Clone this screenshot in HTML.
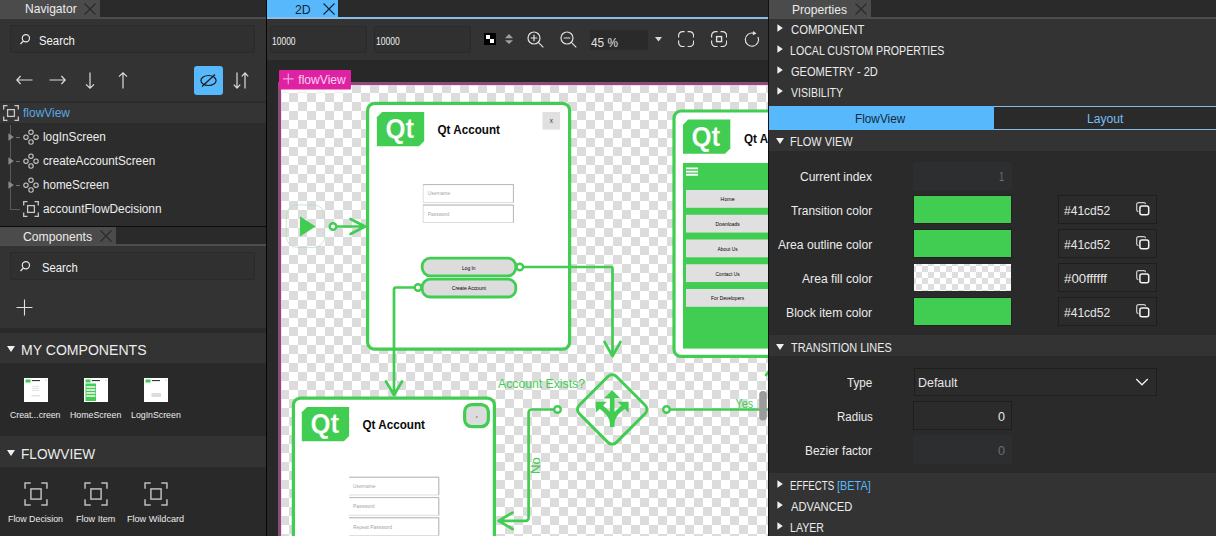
<!DOCTYPE html>
<html><head><meta charset="utf-8"><title>Qt Design Studio - FlowView</title>
<style>
*{box-sizing:border-box;margin:0;padding:0}
html,body{width:1216px;height:536px;overflow:hidden;background:#262626}
body{position:relative;font-family:"Liberation Sans",sans-serif;color:#eaeaea;font-size:12px}
.abs,.abs *{position:absolute}
.t{white-space:nowrap;line-height:1}
#left{left:0;top:0;width:266px;height:536px;background:#333;overflow:hidden}
#div1{left:266px;top:0;width:1px;height:536px;background:#040404}
#center{left:267px;top:0;width:501px;height:536px;background:#282828;overflow:hidden}
#div2{left:768px;top:0;width:1px;height:536px;background:#111}
#right{left:769px;top:0;width:447px;height:536px;background:#333;overflow:hidden}
.tabbar{left:0;height:17px;background:#2a2a2a}
.tab{top:0;height:17px;background:#4b4b4b}
.tabline{height:2px;background:#4d4d4d}
.sbox{background:#303030;border:1px solid #2a2a2a;border-radius:2px}
</style></head><body>
<div id="left" class="abs"><div class="tabbar" style="top:0;width:266px"></div>
<div class="tab" style="left:0;width:100px"></div>
<div class="t" style="left:24.50px;top:2.35px;font-size:13px;color:#ececec;transform-origin:0 0;transform:scaleX(0.9288)">Navigator</div>
<svg style="left:84px;top:3px" width="12" height="12" viewBox="0 0 12 12" fill="none" stroke="#2a2a2a" stroke-width="1.1"><path d="M0.5 0.5L11.5 11.5M11.5 0.5L0.5 11.5"/></svg>
<div class="tabline" style="left:0;top:17px;width:266px"></div>
<div class="sbox" style="left:10px;top:25px;width:245px;height:28px"></div>
<svg style="left:20px;top:33px" width="12" height="12" viewBox="0 0 12 12" fill="none" stroke="#e6e6e6" stroke-width="1.2"><circle cx="5.9" cy="5.3" r="3.6"/><path d="M3.4 8L0.5 11"/></svg>
<div class="t" style="left:38.89px;top:34.89px;font-size:12.5px;color:#f4f4f4;transform-origin:0 0;transform:scaleX(0.9072)">Search</div>
<svg style="left:16px;top:75px" width="17" height="10" viewBox="0 0 17 10" stroke="#dcdcdc" stroke-width="1.2" fill="none"><path d="M0.8 5H16.5M4.6 1L0.8 5L4.6 9"/></svg>
<svg style="left:49px;top:75px" width="17" height="10" viewBox="0 0 17 10" stroke="#dcdcdc" stroke-width="1.2" fill="none"><path d="M0.5 5H16.2M12.4 1L16.2 5L12.4 9"/></svg>
<svg style="left:85px;top:72px" width="10" height="17" viewBox="0 0 10 17" stroke="#dcdcdc" stroke-width="1.2" fill="none"><path d="M5 0.5V16.2M1 12.4L5 16.2L9 12.4"/></svg>
<svg style="left:118px;top:72px" width="10" height="17" viewBox="0 0 10 17" stroke="#dcdcdc" stroke-width="1.2" fill="none"><path d="M5 16.5V0.8M1 4.6L5 0.8L9 4.6"/></svg>
<div style="left:194px;top:66px;width:29px;height:29px;background:#57b9fc;border-radius:3px"></div>
<svg style="left:198px;top:70px" width="21" height="21" viewBox="0 0 21 21" fill="none" stroke="#1a1a1a" stroke-width="1.2"><ellipse cx="10.5" cy="10.5" rx="7.6" ry="5"/><path d="M4 16.5L17 4.5"/></svg>
<svg style="left:233px;top:72px" width="16" height="17" viewBox="0 0 16 17" stroke="#dcdcdc" stroke-width="1.2" fill="none"><path d="M4 0.5V16M0.8 12.6L4 16L7.2 12.6M12 16.5V1M8.8 4.4L12 1L15.2 4.4"/></svg>
<div style="left:0;top:101px;width:266px;height:125px;background:#2c2c2c"></div>
<div style="left:0;top:102.5px;width:266px;height:20.5px;background:#343434"></div>
<svg style="left:3px;top:105px" width="16" height="16" viewBox="0 0 16 16" fill="none" stroke="#c8c8c8" stroke-width="1.3"><path d="M0.7 4.5V0.7H4.5M11.5 0.7H15.3V4.5M15.3 11.5V15.3H11.5M4.5 15.3H0.7V11.5"/><rect x="4.6" y="4.6" width="6.8" height="6.8"/></svg>
<div class="t" style="left:23.22px;top:107.19px;font-size:12.5px;color:#57a8e6;transform-origin:0 0;transform:scaleX(0.9573)">flowView</div>
<div style="left:10px;top:125px;width:1px;height:85px;background:#595959"></div>
<div style="left:10px;top:209px;width:10px;height:1px;background:#595959"></div>
<div style="left:16px;top:137px;width:4px;height:1px;background:#707070"></div>
<svg style="left:7.6px;top:133px" width="6" height="8" viewBox="0 0 6 8"><path d="M0.4 0.2L5.8 4L0.4 7.8Z" fill="#8a8a8a"/></svg>
<svg style="left:23px;top:129px" width="16" height="16" viewBox="0 0 16 16" fill="none" stroke="#c8c8c8" stroke-width="1.1"><circle cx="8" cy="3.2" r="2.2"/><circle cx="3" cy="8.2" r="2.2"/><circle cx="13" cy="8.2" r="2.2"/><circle cx="8" cy="13" r="2.2"/></svg>
<div class="t" style="left:43.41px;top:131.49px;font-size:12.5px;color:#ececec;transform-origin:0 0;transform:scaleX(0.9422)">logInScreen</div>
<div style="left:16px;top:161px;width:4px;height:1px;background:#707070"></div>
<svg style="left:7.6px;top:157px" width="6" height="8" viewBox="0 0 6 8"><path d="M0.4 0.2L5.8 4L0.4 7.8Z" fill="#8a8a8a"/></svg>
<svg style="left:23px;top:153px" width="16" height="16" viewBox="0 0 16 16" fill="none" stroke="#c8c8c8" stroke-width="1.1"><circle cx="8" cy="3.2" r="2.2"/><circle cx="3" cy="8.2" r="2.2"/><circle cx="13" cy="8.2" r="2.2"/><circle cx="8" cy="13" r="2.2"/></svg>
<div class="t" style="left:42.80px;top:155.49px;font-size:12.5px;color:#ececec;transform-origin:0 0;transform:scaleX(0.9388)">createAccountScreen</div>
<div style="left:16px;top:185px;width:4px;height:1px;background:#707070"></div>
<svg style="left:7.6px;top:181px" width="6" height="8" viewBox="0 0 6 8"><path d="M0.4 0.2L5.8 4L0.4 7.8Z" fill="#8a8a8a"/></svg>
<svg style="left:23px;top:177px" width="16" height="16" viewBox="0 0 16 16" fill="none" stroke="#c8c8c8" stroke-width="1.1"><circle cx="8" cy="3.2" r="2.2"/><circle cx="3" cy="8.2" r="2.2"/><circle cx="13" cy="8.2" r="2.2"/><circle cx="8" cy="13" r="2.2"/></svg>
<div class="t" style="left:43.39px;top:179.49px;font-size:12.5px;color:#ececec;transform-origin:0 0;transform:scaleX(0.9304)">homeScreen</div>
<svg style="left:23px;top:201px" width="16" height="16" viewBox="0 0 16 16" fill="none" stroke="#c8c8c8" stroke-width="1.3"><path d="M0.7 4.5V0.7H4.5M11.5 0.7H15.3V4.5M15.3 11.5V15.3H11.5M4.5 15.3H0.7V11.5"/><rect x="4.6" y="4.6" width="6.8" height="6.8"/></svg>
<div class="t" style="left:42.80px;top:203.49px;font-size:12.5px;color:#ececec;transform-origin:0 0;transform:scaleX(0.9479)">accountFlowDecisionn</div>
<div style="left:0;top:226px;width:266px;height:1px;background:#0c0c0c"></div>
<div class="tabbar" style="top:227px;width:266px"></div>
<div class="tab" style="left:0;top:227px;width:116px"></div>
<div class="t" style="left:23.39px;top:230.35px;font-size:13px;color:#ececec;transform-origin:0 0;transform:scaleX(0.9366)">Components</div>
<svg style="left:100px;top:230px" width="12" height="12" viewBox="0 0 12 12" fill="none" stroke="#2a2a2a" stroke-width="1.1"><path d="M0.5 0.5L11.5 11.5M11.5 0.5L0.5 11.5"/></svg>
<div class="tabline" style="left:0;top:244px;width:266px"></div>
<div class="sbox" style="left:10px;top:252px;width:245px;height:28px"></div>
<svg style="left:20px;top:260.3px" width="12" height="12" viewBox="0 0 12 12" fill="none" stroke="#e6e6e6" stroke-width="1.2"><circle cx="5.9" cy="5.3" r="3.6"/><path d="M3.4 8L0.5 11"/></svg>
<div class="t" style="left:41.89px;top:261.59px;font-size:12.5px;color:#f4f4f4;transform-origin:0 0;transform:scaleX(0.9020)">Search</div>
<svg style="left:16px;top:299px" width="17" height="17" viewBox="0 0 17 17" stroke="#e0e0e0" stroke-width="1.1"><path d="M8.5 0.5V16.5M0.5 8.5H16.5"/></svg>
<div style="left:0;top:328px;width:266px;height:5px;background:#2a2a2a"></div>
<div style="left:0;top:363px;width:266px;height:73px;background:#292929"></div>
<svg style="left:7px;top:346px" width="8" height="6" viewBox="0 0 8 6"><path d="M0 0H8L4 6Z" fill="#f0f0f0"/></svg>
<div class="t" style="left:21.34px;top:342.62px;font-size:14.5px;color:#ececec;transform-origin:0 0;transform:scaleX(0.9698)">MY COMPONENTS</div>
<div style="left:0;top:467px;width:266px;height:69px;background:#292929"></div>
<svg style="left:7px;top:450px" width="8" height="6" viewBox="0 0 8 6"><path d="M0 0H8L4 6Z" fill="#f0f0f0"/></svg>
<div class="t" style="left:21.38px;top:446.52px;font-size:14.5px;color:#ececec;transform-origin:0 0;transform:scaleX(0.9397)">FLOWVIEW</div>
<svg style="left:24px;top:378px" width="24" height="24" viewBox="0 0 24 24"><rect width="24" height="24" fill="#fff"/><rect x="1.5" y="1.5" width="5" height="3" fill="#41cd52"/><rect x="7.8" y="2.1" width="8.2" height="1" fill="#222"/><rect x="21" y="1.5" width="1.6" height="1.6" fill="#ddd"/><rect x="8" y="8" width="7" height="0.8" fill="#ddd"/><rect x="8" y="10" width="7" height="0.8" fill="#ddd"/><rect x="8" y="12" width="7" height="0.8" fill="#ddd"/><rect x="7.5" y="17" width="8.5" height="1.5" fill="#e2e2e2"/></svg>
<svg style="left:84px;top:378px" width="24" height="24" viewBox="0 0 24 24"><rect width="24" height="24" fill="#fff"/><rect x="1.5" y="1.5" width="5" height="3" fill="#41cd52"/><rect x="7.8" y="2.1" width="8.2" height="1" fill="#222"/><rect x="21" y="1.5" width="1.6" height="1.6" fill="#ddd"/><rect x="1.5" y="5.5" width="10.5" height="17.5" fill="#41cd52"/><rect x="2.3" y="8" width="9" height="2" fill="#cfe9d2"/><rect x="2.3" y="11" width="9" height="2" fill="#cfe9d2"/><rect x="2.3" y="14" width="9" height="2" fill="#cfe9d2"/><rect x="2.3" y="17" width="9" height="2" fill="#cfe9d2"/></svg>
<svg style="left:144px;top:378px" width="24" height="24" viewBox="0 0 24 24"><rect width="24" height="24" fill="#fff"/><rect x="1.5" y="1.5" width="5" height="3" fill="#41cd52"/><rect x="7.8" y="2.1" width="8.2" height="1" fill="#222"/><rect x="21" y="1.5" width="1.6" height="1.6" fill="#ddd"/><rect x="7.5" y="15" width="9.5" height="4" fill="#ddd"/></svg>
<div class="t" style="left:10.06px;top:409.71px;font-size:9.8px;color:#ececec;transform-origin:0 0;transform:scaleX(0.8912)">Creat...creen</div>
<div class="t" style="left:69.78px;top:409.71px;font-size:9.8px;color:#ececec;transform-origin:0 0;transform:scaleX(0.8967)">HomeScreen</div>
<div class="t" style="left:130.78px;top:409.71px;font-size:9.8px;color:#ececec;transform-origin:0 0;transform:scaleX(0.8957)">LogInScreen</div>
<svg style="left:24px;top:482px" width="24" height="24" viewBox="0 0 16 16" fill="none" stroke="#bdbdbd" stroke-width="1.0"><path d="M0.7 4.5V0.7H4.5M11.5 0.7H15.3V4.5M15.3 11.5V15.3H11.5M4.5 15.3H0.7V11.5"/><rect x="4.6" y="4.6" width="6.8" height="6.8"/></svg>
<svg style="left:84px;top:482px" width="24" height="24" viewBox="0 0 16 16" fill="none" stroke="#bdbdbd" stroke-width="1.0"><path d="M0.7 4.5V0.7H4.5M11.5 0.7H15.3V4.5M15.3 11.5V15.3H11.5M4.5 15.3H0.7V11.5"/><rect x="4.6" y="4.6" width="6.8" height="6.8"/></svg>
<svg style="left:144px;top:482px" width="24" height="24" viewBox="0 0 16 16" fill="none" stroke="#bdbdbd" stroke-width="1.0"><path d="M0.7 4.5V0.7H4.5M11.5 0.7H15.3V4.5M15.3 11.5V15.3H11.5M4.5 15.3H0.7V11.5"/><rect x="4.6" y="4.6" width="6.8" height="6.8"/></svg>
<div class="t" style="left:7.77px;top:513.91px;font-size:9.8px;color:#ececec;transform-origin:0 0;transform:scaleX(0.9025)">Flow Decision</div>
<div class="t" style="left:75.75px;top:513.91px;font-size:9.8px;color:#ececec;transform-origin:0 0;transform:scaleX(0.9265)">Flow Item</div>
<div class="t" style="left:126.75px;top:513.91px;font-size:9.8px;color:#ececec;transform-origin:0 0;transform:scaleX(0.9276)">Flow Wildcard</div></div>
<div id="div1" class="abs"></div>
<div id="center" class="abs"><div class="tabbar" style="top:0;width:501px"></div>
<div style="left:0;top:0;width:71px;height:17px;background:#57b9fc"></div>
<div class="t" style="left:28.14px;top:3.10px;font-size:13px;color:#10243a;transform-origin:0 0;transform:scaleX(0.9452)">2D</div>
<svg style="left:56px;top:3px" width="12" height="12" viewBox="0 0 12 12" fill="none" stroke="#10243a" stroke-width="1.1"><path d="M0.5 0.5L11.5 11.5M11.5 0.5L0.5 11.5"/></svg>
<div style="left:0;top:17px;width:501px;height:2px;background:#8cbde8"></div>
<div style="left:0;top:19px;width:501px;height:1px;background:#1a2f43;opacity:.7"></div>
<div style="left:0;top:19px;width:501px;height:41px;background:#333"></div>
<div class="sbox" style="left:3px;top:26px;width:97px;height:27px"></div>
<div class="sbox" style="left:107px;top:26px;width:97px;height:27px"></div>
<div class="t" style="left:4.66px;top:36.17px;font-size:10.5px;color:#f0f0f0;transform-origin:0 0;transform:scaleX(0.8069)">10000</div>
<div class="t" style="left:108.66px;top:36.17px;font-size:10.5px;color:#f0f0f0;transform-origin:0 0;transform:scaleX(0.8140)">10000</div>
<svg style="left:217px;top:33px" width="12" height="12" viewBox="0 0 12 12"><rect width="12" height="12" fill="#000"/><rect x="2" y="2" width="4" height="4" fill="#fff"/><rect x="6" y="6" width="4" height="4" fill="#fff"/></svg>
<svg style="left:238px;top:34px" width="8" height="10" viewBox="0 0 8 10" fill="#a0a0a0"><path d="M0 4.3L4 0L8 4.3ZM0 6.3H8L4 10Z"/></svg>
<svg style="left:260.29999999999995px;top:30.8px" width="18" height="18" viewBox="0 0 18 18" fill="none" stroke="#e2e2e2" stroke-width="1.2"><circle cx="7" cy="7" r="6"/><path d="M11.3 11.3L16.3 16.3M3.7 7H10.3M7 3.7V10.3"/></svg>
<svg style="left:293.29999999999995px;top:30.8px" width="18" height="18" viewBox="0 0 18 18" fill="none" stroke="#e2e2e2" stroke-width="1.2"><circle cx="7" cy="7" r="6"/><path d="M11.3 11.3L16.3 16.3M3.7 7H10.3"/></svg>
<div style="left:323px;top:30px;width:58px;height:20px;background:#2a2a2a"></div>
<div class="t" style="left:324.48px;top:36.99px;font-size:12.5px;color:#e0e0e0;transform-origin:0 0;transform:scaleX(0.9449)">45 %</div>
<svg style="left:388px;top:37px" width="7" height="5" viewBox="0 0 7 5"><path d="M0 0H7L3.5 4.6Z" fill="#d8d8d8"/></svg>
<svg style="left:411px;top:31px" width="16.2" height="16.2" viewBox="0 0 16.2 16.2" fill="none" stroke="#e2e2e2" stroke-width="1.2"><path d="M6.6 0.6H4.6A4 4 0 0 0 0.6 4.6V6.6M0.6 9.6V11.6A4 4 0 0 0 4.6 15.6H6.6M9.6 15.6H11.6A4 4 0 0 0 15.6 11.6V9.6M15.6 6.6V4.6A4 4 0 0 0 11.6 0.6H9.6"/></svg>
<svg style="left:444px;top:31px" width="16.2" height="16.2" viewBox="0 0 16.2 16.2" fill="none" stroke="#e2e2e2" stroke-width="1.2"><path d="M6.6 0.6H4.6A4 4 0 0 0 0.6 4.6V6.6M0.6 9.6V11.6A4 4 0 0 0 4.6 15.6H6.6M9.6 15.6H11.6A4 4 0 0 0 15.6 11.6V9.6M15.6 6.6V4.6A4 4 0 0 0 11.6 0.6H9.6"/><rect x="5.6" y="5.6" width="5" height="5" stroke-width="1.4"/></svg>
<svg style="left:476px;top:30px" width="18" height="18" viewBox="0 0 18 18" fill="none" stroke="#e2e2e2" stroke-width="1.2"><path d="M10.5 3.2A6.6 6.6 0 1 0 15 7"/><path d="M10.2 1L13.5 3.6L9.8 5.3Z" fill="#e2e2e2" stroke="none"/></svg>
<svg style="left:0;top:60px" width="501" height="476" viewBox="267 60 501 476" font-family="'Liberation Sans',sans-serif">
<defs><pattern id="chk" x="280" y="84" width="18" height="18" patternUnits="userSpaceOnUse"><rect width="18" height="18" fill="#fff"/><rect width="9" height="9" fill="#dcdcdc"/><rect x="9" y="9" width="9" height="9" fill="#dcdcdc"/></pattern></defs>
<rect x="281" y="85" width="500" height="460" fill="url(#chk)"/>
<rect x="279.5" y="83.5" width="500" height="470" fill="none" stroke="#8a4c7b" stroke-width="3"/>
<rect x="281" y="85" width="500" height="0.9" fill="#f3c6e6" opacity="0.7"/><rect x="281" y="85" width="0.9" height="460" fill="#f3c6e6" opacity="0.7"/>
<rect x="281" y="89" width="70" height="3.6" fill="#fff" opacity="0.85"/>
<rect x="279" y="70" width="72" height="19.5" rx="1" fill="#df22a4"/>
<path d="M283 78.9H293.6M288.3 73.6V84.2" stroke="#f5a3db" stroke-width="1.2"/>
<text x="298.3" y="83.7" font-size="12.5" fill="#fad2ef" textLength="47.5" lengthAdjust="spacingAndGlyphs">flowView</text>
<rect x="367.6" y="103.4" width="202" height="245.8" rx="7" fill="#fff" stroke="#41cd52" stroke-width="3.2"/>
<path d="M382.09999999999997 112H424.2V141.0L419.0 146.2H376.9V117.2Z" fill="#41cd52"/><text x="385.5" y="138.3" font-size="27" font-weight="bold" fill="#fff" stroke="#41cd52" stroke-width="0.15" paint-order="fill" textLength="28.6" lengthAdjust="spacingAndGlyphs">Qt</text>
<text x="437.5" y="134.3" font-size="12" font-weight="bold" fill="#0a0a0a" textLength="62.4" lengthAdjust="spacingAndGlyphs">Qt Account</text>
<rect x="542.5" y="112" width="17.6" height="17.6" fill="#e0e0e0"/>
<text x="551.3" y="123.1" font-size="6.5" fill="#333" text-anchor="middle" textLength="3.2" lengthAdjust="spacingAndGlyphs">x</text>
<rect x="423.2" y="184.6" width="90.2" height="17.8" fill="#fff" stroke="#d6d6d6" stroke-width="0.8"/><path d="M423.2 184.6H513.4V202.4" fill="none" stroke="#b2b2b2" stroke-width="0.9"/><text x="427.8" y="195.4" font-size="5.3" fill="#a4a4a4" textLength="22.5" lengthAdjust="spacingAndGlyphs">Username</text>
<rect x="423.2" y="205" width="90.2" height="17.6" fill="#fff" stroke="#d6d6d6" stroke-width="0.8"/><path d="M423.2 205H513.4V222.6" fill="none" stroke="#b2b2b2" stroke-width="0.9"/><text x="427.8" y="215.70000000000002" font-size="5.3" fill="#a4a4a4" textLength="21.5" lengthAdjust="spacingAndGlyphs">Password</text>
<rect x="422.2" y="258.2" width="93.6" height="17.6" rx="8" fill="#dcdcdc" stroke="#41cd52" stroke-width="2.8"/>
<rect x="422.2" y="279.2" width="93.6" height="17.8" rx="8" fill="#dcdcdc" stroke="#41cd52" stroke-width="2.8"/>
<text x="468.8" y="269.8" font-size="5.4" fill="#000" text-anchor="middle" textLength="13.5" lengthAdjust="spacingAndGlyphs">Log In</text>
<text x="468.8" y="289.8" font-size="5.4" fill="#000" text-anchor="middle" textLength="34" lengthAdjust="spacingAndGlyphs">Create Account</text>
<rect x="286.3" y="204.9" width="38.4" height="42.6" rx="11" fill="none" stroke="#b4dcbb" stroke-width="0.7"/>
<path d="M300 216.2L315.6 226.4L300 236.4Z" fill="#41cd52"/>
<path d="M336.5 226.5H364.5M350.5 219L365 226.5L350.5 234" fill="none" stroke="#41cd52" stroke-width="2.7" stroke-linejoin="round" stroke-linecap="round"/>
<circle cx="333" cy="226.5" r="3.3" fill="#fff" stroke="#41cd52" stroke-width="2.4"/>
<path d="M523.5 267H611A1.5 1.5 0 0 1 612.5 268.5V355M604.5 342L612.5 356L620.5 342" fill="none" stroke="#41cd52" stroke-width="2.7" stroke-linejoin="round" stroke-linecap="round"/>
<circle cx="519.8" cy="267" r="3.3" fill="#fff" stroke="#41cd52" stroke-width="2.4"/>
<path d="M414 287.5H396A2 2 0 0 0 394 289.5V394M386 381.5L394 395L402 381.5" fill="none" stroke="#41cd52" stroke-width="2.7" stroke-linejoin="round" stroke-linecap="round"/>
<circle cx="418" cy="287.5" r="3.3" fill="#fff" stroke="#41cd52" stroke-width="2.4"/>
<rect x="293.4" y="398.1" width="201" height="200" rx="7" fill="#fff" stroke="#41cd52" stroke-width="3.2"/>
<path d="M307.0 407H349.1V436.0L343.90000000000003 441.2H301.8V412.2Z" fill="#41cd52"/><text x="310.40000000000003" y="433.3" font-size="27" font-weight="bold" fill="#fff" stroke="#41cd52" stroke-width="0.15" paint-order="fill" textLength="28.6" lengthAdjust="spacingAndGlyphs">Qt</text>
<text x="362.5" y="429.2" font-size="12" font-weight="bold" fill="#0a0a0a" textLength="62.4" lengthAdjust="spacingAndGlyphs">Qt Account</text>
<rect x="464.65" y="404.65" width="23.7" height="21.9" rx="7" fill="#dcdcdc" stroke="#41cd52" stroke-width="3.2"/>
<text x="476.6" y="417.8" font-size="3.2" fill="#444" text-anchor="middle" textLength="1.8" lengthAdjust="spacingAndGlyphs">x</text>
<rect x="348.4" y="477.2" width="90.4" height="17.8" fill="#fff" stroke="#d6d6d6" stroke-width="0.8"/><path d="M348.4 477.2H438.79999999999995V495.0" fill="none" stroke="#b2b2b2" stroke-width="0.9"/><text x="353.0" y="487.99999999999994" font-size="5.3" fill="#a4a4a4" textLength="22.5" lengthAdjust="spacingAndGlyphs">Username</text>
<rect x="348.4" y="497.6" width="90.4" height="17.6" fill="#fff" stroke="#d6d6d6" stroke-width="0.8"/><path d="M348.4 497.6H438.79999999999995V515.2" fill="none" stroke="#b2b2b2" stroke-width="0.9"/><text x="353.0" y="508.3" font-size="5.3" fill="#a4a4a4" textLength="21.5" lengthAdjust="spacingAndGlyphs">Password</text>
<rect x="348.4" y="517.8" width="90.4" height="17.8" fill="#fff" stroke="#d6d6d6" stroke-width="0.8"/><path d="M348.4 517.8H438.79999999999995V535.5999999999999" fill="none" stroke="#b2b2b2" stroke-width="0.9"/><text x="353.0" y="528.5999999999999" font-size="5.3" fill="#a4a4a4" textLength="39" lengthAdjust="spacingAndGlyphs">Repeat Password</text>
<rect x="347.5" y="476" width="1.6" height="60" fill="#fff"/>
<text x="498" y="388" font-size="13" fill="#41cd52" textLength="87" lengthAdjust="spacingAndGlyphs">Account Exists?</text>
<rect x="-26.3" y="-26.3" width="52.6" height="52.6" rx="6" transform="translate(612.2 409.4) rotate(45)" fill="none" stroke="#41cd52" stroke-width="2.9"/>
<g fill="#41cd52" stroke="none"><path d="M612.2 390.3L620.3 398.2H604.1Z"/><path d="M595.8 401.8H606.8L595.8 412.8Z"/><path d="M628.6 401.8H617.6L628.6 412.8Z"/></g>
<path d="M612.2 427V397M612.2 424C612.2 415 606 411.5 600.5 406.5M612.2 424C612.2 415 618.4 411.5 623.9 406.5" fill="none" stroke="#41cd52" stroke-width="4.6"/>
<path d="M554 409.5H531.6A3 3 0 0 0 528.6 412.5V517.8A3 3 0 0 1 525.6 520.8H499.5M512.5 512.6L498.5 520.8L512.5 529" fill="none" stroke="#41cd52" stroke-width="2.7" stroke-linejoin="round" stroke-linecap="round"/>
<circle cx="557.5" cy="409.5" r="3.3" fill="#fff" stroke="#41cd52" stroke-width="2.4"/>
<text transform="translate(540.2 473.9) rotate(-90)" font-size="12.5" fill="#41cd52" textLength="16.8" lengthAdjust="spacingAndGlyphs">No</text>
<path d="M670 409.5H770" fill="none" stroke="#41cd52" stroke-width="2.7" stroke-linejoin="round" stroke-linecap="round"/>
<circle cx="666.5" cy="409.5" r="3.3" fill="#fff" stroke="#41cd52" stroke-width="2.4"/>
<text x="735.5" y="408" font-size="12.5" fill="#41cd52" textLength="17.5" lengthAdjust="spacingAndGlyphs">Yes</text>
<path d="M766 375L769 371" fill="none" stroke="#41cd52" stroke-width="2.7" stroke-linejoin="round" stroke-linecap="round"/>
<rect x="674" y="111" width="140" height="245.4" rx="7" fill="#fff" stroke="#41cd52" stroke-width="3.2"/>
<path d="M688.2 119.5H730.3V148.5L725.0999999999999 153.7H683V124.7Z" fill="#41cd52"/><text x="691.6" y="145.8" font-size="27" font-weight="bold" fill="#fff" stroke="#41cd52" stroke-width="0.15" paint-order="fill" textLength="28.6" lengthAdjust="spacingAndGlyphs">Qt</text>
<text x="744" y="142.6" font-size="12" font-weight="bold" fill="#0a0a0a" textLength="62.4" lengthAdjust="spacingAndGlyphs">Qt Account</text>
<rect x="683" y="163" width="100" height="185.6" fill="#41cd52"/>
<path d="M686 168.4H698M686 171.6H698M686 174.8H698" stroke="#fff" stroke-width="1.9"/>
<rect x="686" y="190.0" width="90" height="17.8" fill="#e0e0e0"/>
<text x="727.6" y="201.3" font-size="5.4" fill="#000" text-anchor="middle" textLength="14" lengthAdjust="spacingAndGlyphs">Home</text>
<rect x="686" y="214.75" width="90" height="17.8" fill="#e0e0e0"/>
<text x="727.6" y="226.05" font-size="5.4" fill="#000" text-anchor="middle" textLength="24" lengthAdjust="spacingAndGlyphs">Downloads</text>
<rect x="686" y="239.5" width="90" height="17.8" fill="#e0e0e0"/>
<text x="727.6" y="250.8" font-size="5.4" fill="#000" text-anchor="middle" textLength="20" lengthAdjust="spacingAndGlyphs">About Us</text>
<rect x="686" y="264.25" width="90" height="17.8" fill="#e0e0e0"/>
<text x="727.6" y="275.55" font-size="5.4" fill="#000" text-anchor="middle" textLength="24" lengthAdjust="spacingAndGlyphs">Contact Us</text>
<rect x="686" y="289.0" width="90" height="17.8" fill="#e0e0e0"/>
<text x="727.6" y="300.3" font-size="5.4" fill="#000" text-anchor="middle" textLength="33" lengthAdjust="spacingAndGlyphs">For Developers</text>
<rect x="759.2" y="391" width="7.6" height="29.6" rx="3.6" fill="#9b9b9b"/>
</svg></div>
<div id="div2" class="abs"></div>
<div id="right" class="abs"><div class="tabbar" style="top:0;width:447px"></div>
<div class="tab" style="left:0;width:102px"></div>
<div class="t" style="left:23.26px;top:3.10px;font-size:13px;color:#ececec;transform-origin:0 0;transform:scaleX(0.9269)">Properties</div>
<svg style="left:86px;top:3px" width="12" height="12" viewBox="0 0 12 12" fill="none" stroke="#2a2a2a" stroke-width="1.1"><path d="M0.5 0.5L11.5 11.5M11.5 0.5L0.5 11.5"/></svg>
<div class="tabline" style="left:0;top:17px;width:447px"></div>
<svg style="left:8px;top:23.9px" width="6" height="8" viewBox="0 0 6 8"><path d="M0.4 0.2L5.8 4L0.4 7.8Z" fill="#f0f0f0"/></svg><div class="t" style="left:21.69px;top:24.09px;font-size:12.5px;color:#ececec;transform-origin:0 0;transform:scaleX(0.9024)">COMPONENT</div>
<svg style="left:8px;top:44.9px" width="6" height="8" viewBox="0 0 6 8"><path d="M0.4 0.2L5.8 4L0.4 7.8Z" fill="#f0f0f0"/></svg><div class="t" style="left:21.37px;top:45.09px;font-size:12.5px;color:#ececec;transform-origin:0 0;transform:scaleX(0.8491)">LOCAL CUSTOM PROPERTIES</div>
<svg style="left:8px;top:65.9px" width="6" height="8" viewBox="0 0 6 8"><path d="M0.4 0.2L5.8 4L0.4 7.8Z" fill="#f0f0f0"/></svg><div class="t" style="left:21.70px;top:66.09px;font-size:12.5px;color:#ececec;transform-origin:0 0;transform:scaleX(0.8843)">GEOMETRY - 2D</div>
<svg style="left:8px;top:86.9px" width="6" height="8" viewBox="0 0 6 8"><path d="M0.4 0.2L5.8 4L0.4 7.8Z" fill="#f0f0f0"/></svg><div class="t" style="left:22.20px;top:87.09px;font-size:12.5px;color:#ececec;transform-origin:0 0;transform:scaleX(0.8415)">VISIBILITY</div>
<div style="left:0;top:106px;width:225px;height:24px;background:#57b9fc"></div>
<div style="left:225px;top:106px;width:222px;height:24px;background:#2a2a2a;border-top:1px solid #86b9e6;border-bottom:1px solid #86b9e6"></div>
<div class="t" style="left:86.28px;top:113.34px;font-size:12.5px;color:#12283d;transform-origin:0 0;transform:scaleX(0.9426)">FlowView</div>
<div class="t" style="left:317.50px;top:113.34px;font-size:12.5px;color:#76bef6;transform-origin:0 0;transform:scaleX(0.9682)">Layout</div>
<div style="left:0;top:130px;width:447px;height:343px;background:#2a2a2a"></div>
<div style="left:0;top:130px;width:447px;height:21px;background:#333"></div>
<svg style="left:7px;top:138px" width="8" height="6" viewBox="0 0 8 6"><path d="M0 0H8L4 6Z" fill="#f0f0f0"/></svg>
<div class="t" style="left:21.35px;top:136.49px;font-size:12.5px;color:#ececec;transform-origin:0 0;transform:scaleX(0.8767)">FLOW VIEW</div>
<div class="t" style="left:31.15px;top:171.09px;font-size:12.5px;color:#ececec;transform-origin:0 0;transform:scaleX(0.9596)">Current index</div>
<div style="left:145px;top:162px;width:99px;height:29px;background:#2d2e30;margin-left:-1px;border-radius:2px"></div>
<div class="t" style="left:229.81px;top:171.09px;font-size:12.5px;color:#6e6e6e;transform-origin:0 0;transform:scaleX(0.7399)">1</div>
<div class="t" style="left:21.98px;top:205.09px;font-size:12.5px;color:#ececec;transform-origin:0 0;transform:scaleX(0.9556)">Transition color</div>
<div style="left:145px;top:196px;width:97px;height:27px;background:#41cd52;box-shadow:0 0 0 1px #232323"></div>
<div style="left:289px;top:195px;width:99px;height:29px;background:#2b2b2b;border:1px solid #1e1e1e"></div><div class="t" style="left:294.94px;top:204.99px;font-size:12.5px;color:#e6e6e6;transform-origin:0 0;transform:scaleX(0.9630)">#41cd52</div><svg style="left:366.5999999999999px;top:202.2px" width="14" height="14" viewBox="0 0 14 14" fill="none" stroke="#f4f4f4" stroke-width="1.5"><rect x="3.9" y="3.9" width="8.8" height="8.8" rx="2"/><path d="M2.4 9.6A1.8 1.8 0 0 1 0.7 7.8V2.6A1.9 1.9 0 0 1 2.6 0.7H7.8A1.8 1.8 0 0 1 9.6 2.2" stroke="#cfcfcf" stroke-width="1.2"/></svg>
<div class="t" style="left:8.97px;top:239.09px;font-size:12.5px;color:#ececec;transform-origin:0 0;transform:scaleX(0.9684)">Area outline color</div>
<div style="left:145px;top:230px;width:97px;height:27px;background:#41cd52;box-shadow:0 0 0 1px #232323"></div>
<div style="left:289px;top:229px;width:99px;height:29px;background:#2b2b2b;border:1px solid #1e1e1e"></div><div class="t" style="left:294.94px;top:238.99px;font-size:12.5px;color:#e6e6e6;transform-origin:0 0;transform:scaleX(0.9630)">#41cd52</div><svg style="left:366.5999999999999px;top:236.2px" width="14" height="14" viewBox="0 0 14 14" fill="none" stroke="#f4f4f4" stroke-width="1.5"><rect x="3.9" y="3.9" width="8.8" height="8.8" rx="2"/><path d="M2.4 9.6A1.8 1.8 0 0 1 0.7 7.8V2.6A1.9 1.9 0 0 1 2.6 0.7H7.8A1.8 1.8 0 0 1 9.6 2.2" stroke="#cfcfcf" stroke-width="1.2"/></svg>
<div class="t" style="left:32.97px;top:273.09px;font-size:12.5px;color:#ececec;transform-origin:0 0;transform:scaleX(0.9718)">Area fill color</div>
<div style="left:145px;top:264px;width:97px;height:27px;background:#fff;background-image:linear-gradient(45deg,#dedede 25%,transparent 25%,transparent 75%,#dedede 75%),linear-gradient(45deg,#dedede 25%,transparent 25%,transparent 75%,#dedede 75%);background-size:12px 12px;background-position:2px 2px,8px 8px"></div>
<div style="left:289px;top:263px;width:99px;height:29px;background:#2b2b2b;border:1px solid #1e1e1e"></div><div class="t" style="left:294.93px;top:272.99px;font-size:12.5px;color:#e6e6e6;transform-origin:0 0;transform:scaleX(1.0609)">#00ffffff</div><svg style="left:366.5999999999999px;top:270.2px" width="14" height="14" viewBox="0 0 14 14" fill="none" stroke="#f4f4f4" stroke-width="1.5"><rect x="3.9" y="3.9" width="8.8" height="8.8" rx="2"/><path d="M2.4 9.6A1.8 1.8 0 0 1 0.7 7.8V2.6A1.9 1.9 0 0 1 2.6 0.7H7.8A1.8 1.8 0 0 1 9.6 2.2" stroke="#cfcfcf" stroke-width="1.2"/></svg>
<div class="t" style="left:16.99px;top:307.09px;font-size:12.5px;color:#ececec;transform-origin:0 0;transform:scaleX(0.9770)">Block item color</div>
<div style="left:145px;top:298px;width:97px;height:27px;background:#41cd52;box-shadow:0 0 0 1px #232323"></div>
<div style="left:289px;top:297px;width:99px;height:29px;background:#2b2b2b;border:1px solid #1e1e1e"></div><div class="t" style="left:294.94px;top:306.99px;font-size:12.5px;color:#e6e6e6;transform-origin:0 0;transform:scaleX(0.9630)">#41cd52</div><svg style="left:366.5999999999999px;top:304.2px" width="14" height="14" viewBox="0 0 14 14" fill="none" stroke="#f4f4f4" stroke-width="1.5"><rect x="3.9" y="3.9" width="8.8" height="8.8" rx="2"/><path d="M2.4 9.6A1.8 1.8 0 0 1 0.7 7.8V2.6A1.9 1.9 0 0 1 2.6 0.7H7.8A1.8 1.8 0 0 1 9.6 2.2" stroke="#cfcfcf" stroke-width="1.2"/></svg>
<div style="left:0;top:335px;width:447px;height:21px;background:#333"></div>
<svg style="left:7px;top:343.5px" width="8" height="6" viewBox="0 0 8 6"><path d="M0 0H8L4 6Z" fill="#f0f0f0"/></svg>
<div class="t" style="left:22.00px;top:342.34px;font-size:12.5px;color:#ececec;transform-origin:0 0;transform:scaleX(0.8736)">TRANSITION LINES</div>
<div class="t" style="left:78.24px;top:377.49px;font-size:12.5px;color:#ececec;transform-origin:0 0;transform:scaleX(0.9322)">Type</div>
<div style="left:145px;top:368px;width:243px;height:28px;background:#2b2b2b;border:1px solid #1e1e1e"></div>
<div class="t" style="left:149.22px;top:377.39px;font-size:12.5px;color:#e6e6e6;transform-origin:0 0;transform:scaleX(0.9943)">Default</div>
<svg style="left:366px;top:378px" width="14" height="8" viewBox="0 0 14 8" fill="none" stroke="#f0f0f0" stroke-width="1.3"><path d="M1.2 1L7 6.8L12.8 1"/></svg>
<div class="t" style="left:67.55px;top:410.84px;font-size:12.5px;color:#ececec;transform-origin:0 0;transform:scaleX(0.9215)">Radius</div>
<div style="left:144px;top:401px;width:99px;height:29px;background:#2b2b2b;border:1px solid #1e1e1e"></div>
<div class="t" style="left:229.00px;top:410.84px;font-size:12.5px;color:#e6e6e6;transform-origin:0 0;transform:scaleX(1.0052)">0</div>
<div class="t" style="left:36.27px;top:444.84px;font-size:12.5px;color:#ececec;transform-origin:0 0;transform:scaleX(0.9538)">Bezier factor</div>
<div style="left:145px;top:435px;width:99px;height:29px;background:#2d2e30;margin-left:-1px;border-radius:2px"></div>
<div class="t" style="left:229.00px;top:444.84px;font-size:12.5px;color:#6e6e6e;transform-origin:0 0;transform:scaleX(1.0052)">0</div>
<svg style="left:8px;top:480.15px" width="6" height="8" viewBox="0 0 6 8"><path d="M0.4 0.2L5.8 4L0.4 7.8Z" fill="#f0f0f0"/></svg><div class="t" style="left:21.45px;top:480.34px;font-size:12.5px;color:#ececec;transform-origin:0 0;transform:scaleX(0.7765)">EFFECTS</div><div class="t" style="left:68.49px;top:480.34px;font-size:12.5px;color:#57b9fc;transform-origin:0 0;transform:scaleX(0.8738)">[BETA]</div>
<svg style="left:8px;top:501.15px" width="6" height="8" viewBox="0 0 6 8"><path d="M0.4 0.2L5.8 4L0.4 7.8Z" fill="#f0f0f0"/></svg><div class="t" style="left:22.22px;top:501.34px;font-size:12.5px;color:#ececec;transform-origin:0 0;transform:scaleX(0.8946)">ADVANCED</div>
<svg style="left:8px;top:522.15px" width="6" height="8" viewBox="0 0 6 8"><path d="M0.4 0.2L5.8 4L0.4 7.8Z" fill="#f0f0f0"/></svg><div class="t" style="left:21.38px;top:522.34px;font-size:12.5px;color:#ececec;transform-origin:0 0;transform:scaleX(0.8455)">LAYER</div></div>
</body></html>
